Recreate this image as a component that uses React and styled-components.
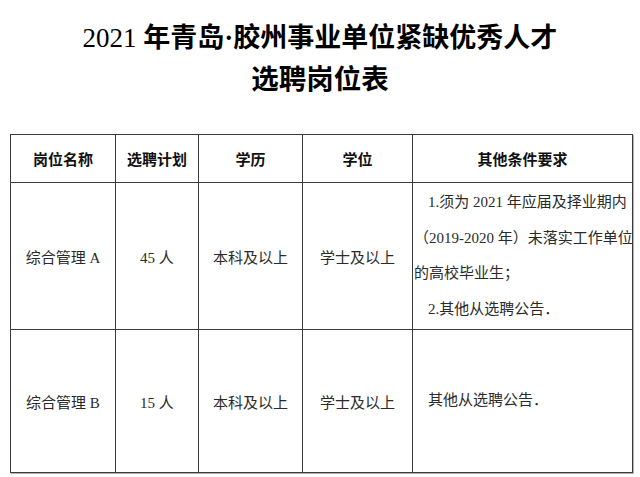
import React from "react";
import styled, { createGlobalStyle } from "styled-components";

const GlobalStyle = createGlobalStyle`
  html, body {
    margin: 0;
    padding: 0;
    background: #ffffff;
  }
  body {
    font-family: "Liberation Serif", "Noto Sans CJK SC", serif;
    color: #111;
  }
`;

const Page = styled.div`
  width: 640px;
  height: 477px;
  overflow: hidden;
  padding-top: 18px;
  box-sizing: border-box;
`;

const Title = styled.h1`
  margin: 0;
  text-align: center;
  font-family: "Liberation Serif", "Noto Sans CJK SC", serif;
  font-weight: 700;
  font-size: ${(p) => p.$size || 27}px;
  line-height: 41px;
  color: #000;
  white-space: nowrap;
`;

const Num = styled.span`
  font-weight: 400;
`;

const Table = styled.div`
  margin: 34px 0 0 10px;
  width: 623px;
  display: grid;
  grid-template-columns: 104px 82px 103px 109px 219px;
  grid-template-rows: 47px 146px 142px;
  gap: 1px;
  padding: 1px;
  box-sizing: border-box;
  background: #3a3a3a;
  box-shadow: 1px 1px 0 #b5b5b5;
`;

const Cell = styled.div`
  background: #fff;
  display: flex;
  flex-direction: column;
  justify-content: center;
  align-items: ${(p) => (p.$left ? "stretch" : "center")};
  padding-left: ${(p) => (p.$left ? 1 : 0)}px;
  font-family: "Liberation Serif", "Noto Sans CJK SC", serif;
  font-size: 15px;
  color: #2a2a2a;
  white-space: nowrap;
`;

const HeadCell = styled(Cell)`
  font-family: "Noto Sans CJK SC", sans-serif;
  font-weight: 700;
  color: #111;
`;

const Line = styled.div`
  line-height: 35.5px;
  text-indent: ${(p) => (p.$indent ? 14 : 0)}px;
  white-space: nowrap;
`;

const headers = ["岗位名称", "选聘计划", "学历", "学位", "其他条件要求"];

const rows = [
  {
    name: "综合管理 A",
    plan: "45 人",
    edu: "本科及以上",
    degree: "学士及以上",
    notes: [
      { text: "1.须为 2021 年应届及择业期内", indent: true },
      { text: "（2019-2020 年）未落实工作单位" },
      { text: "的高校毕业生；" },
      { text: "2.其他从选聘公告．", indent: true },
    ],
  },
  {
    name: "综合管理 B",
    plan: "15 人",
    edu: "本科及以上",
    degree: "学士及以上",
    notes: [{ text: "其他从选聘公告．", indent: true }],
  },
];

export default function App() {
  return (
    <>
      <GlobalStyle />
      <Page>
        <Title>
          <Num>2021</Num> 年青岛·胶州事业单位紧缺优秀人才
        </Title>
        <Title $size={27.5}>选聘岗位表</Title>
        <Table>
          {headers.map((h) => (
            <HeadCell key={h}>{h}</HeadCell>
          ))}
          {rows.map((r) => (
            <React.Fragment key={r.name}>
              <Cell>{r.name}</Cell>
              <Cell>{r.plan}</Cell>
              <Cell>{r.edu}</Cell>
              <Cell>{r.degree}</Cell>
              <Cell $left>
                {r.notes.map((n) => (
                  <Line key={n.text} $indent={n.indent}>
                    {n.text}
                  </Line>
                ))}
              </Cell>
            </React.Fragment>
          ))}
        </Table>
      </Page>
    </>
  );
}
